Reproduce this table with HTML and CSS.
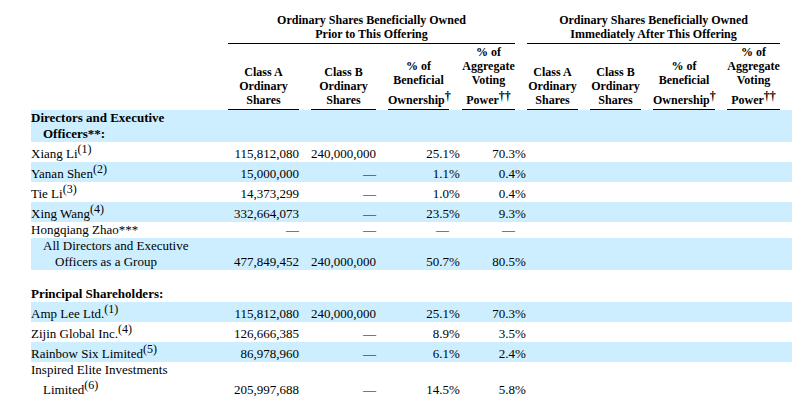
FILE: index.html
```html
<!DOCTYPE html>
<html lang="en">
<head>
<meta charset="utf-8">
<title>Beneficial Ownership</title>
<link rel="stylesheet" href="styles.css">
</head>
<body>
<div class="page">
<table class="own">
  <colgroup>
    <col class="w-label">
    <col class="w-a1"><col class="w-sp">
    <col class="w-b1"><col class="w-sp">
    <col class="w-p1"><col class="w-sp13">
    <col class="w-v1"><col class="w-sp">
    <col class="w-a2"><col class="w-sp">
    <col class="w-b2"><col class="w-sp">
    <col class="w-p2"><col class="w-sp">
    <col class="w-v2"><col class="w-sp">
  </colgroup>
  <thead>
    <tr class="grp">
      <th></th>
      <th colspan="7" class="grp-h">Ordinary Shares Beneficially Owned<br>Prior to This Offering</th>
      <th></th>
      <th colspan="7" class="grp-h">Ordinary Shares Beneficially Owned<br>Immediately After This Offering</th>
      <th></th>
    </tr>
    <tr class="cols">
      <th></th>
      <th class="ch">Class A<br>Ordinary<br>Shares</th><th></th>
      <th class="ch">Class B<br>Ordinary<br>Shares</th><th></th>
      <th class="ch">% of<br>Beneficial<br>Ownership<sup>†</sup></th><th></th>
      <th class="ch">% of<br>Aggregate<br>Voting<br>Power<sup>††</sup></th><th></th>
      <th class="ch">Class A<br>Ordinary<br>Shares</th><th></th>
      <th class="ch">Class B<br>Ordinary<br>Shares</th><th></th>
      <th class="ch">% of<br>Beneficial<br>Ownership<sup>†</sup></th><th></th>
      <th class="ch">% of<br>Aggregate<br>Voting<br>Power<sup>††</sup></th><th></th>
    </tr>
  </thead>
  <tbody>
    <tr class="blue">
      <td class="lbl sect">Directors and Executive Officers**:</td>
      <td colspan="16"></td>
    </tr>
    <tr>
      <td class="lbl">Xiang Li<sup>(1)</sup></td>
      <td class="num">115,812,080</td><td></td>
      <td class="num">240,000,000</td><td></td>
      <td class="num">25.1</td><td class="pct">%</td>
      <td class="num">70.3</td><td class="pct">%</td>
      <td colspan="8"></td>
    </tr>
    <tr class="blue">
      <td class="lbl">Yanan Shen<sup>(2)</sup></td>
      <td class="num">15,000,000</td><td></td>
      <td class="num">—</td><td></td>
      <td class="num">1.1</td><td class="pct">%</td>
      <td class="num">0.4</td><td class="pct">%</td>
      <td colspan="8"></td>
    </tr>
    <tr>
      <td class="lbl">Tie Li<sup>(3)</sup></td>
      <td class="num">14,373,299</td><td></td>
      <td class="num">—</td><td></td>
      <td class="num">1.0</td><td class="pct">%</td>
      <td class="num">0.4</td><td class="pct">%</td>
      <td colspan="8"></td>
    </tr>
    <tr class="blue">
      <td class="lbl">Xing Wang<sup>(4)</sup></td>
      <td class="num">332,664,073</td><td></td>
      <td class="num">—</td><td></td>
      <td class="num">23.5</td><td class="pct">%</td>
      <td class="num">9.3</td><td class="pct">%</td>
      <td colspan="8"></td>
    </tr>
    <tr>
      <td class="lbl">Hongqiang Zhao***</td>
      <td class="num">—</td><td></td>
      <td class="num">—</td><td></td>
      <td class="num">—</td><td></td>
      <td class="num">—</td><td></td>
      <td colspan="8"></td>
    </tr>
    <tr class="blue">
      <td class="lbl ind">All Directors and Executive Officers as a Group</td>
      <td class="num">477,849,452</td><td></td>
      <td class="num">240,000,000</td><td></td>
      <td class="num">50.7</td><td class="pct">%</td>
      <td class="num">80.5</td><td class="pct">%</td>
      <td colspan="8"></td>
    </tr>
    <tr class="gap">
      <td colspan="17"></td>
    </tr>
    <tr>
      <td class="lbl sect">Principal Shareholders:</td>
      <td colspan="16"></td>
    </tr>
    <tr class="blue">
      <td class="lbl">Amp Lee Ltd.<sup>(1)</sup></td>
      <td class="num">115,812,080</td><td></td>
      <td class="num">240,000,000</td><td></td>
      <td class="num">25.1</td><td class="pct">%</td>
      <td class="num">70.3</td><td class="pct">%</td>
      <td colspan="8"></td>
    </tr>
    <tr>
      <td class="lbl">Zijin Global Inc.<sup>(4)</sup></td>
      <td class="num">126,666,385</td><td></td>
      <td class="num">—</td><td></td>
      <td class="num">8.9</td><td class="pct">%</td>
      <td class="num">3.5</td><td class="pct">%</td>
      <td colspan="8"></td>
    </tr>
    <tr class="blue">
      <td class="lbl">Rainbow Six Limited<sup>(5)</sup></td>
      <td class="num">86,978,960</td><td></td>
      <td class="num">—</td><td></td>
      <td class="num">6.1</td><td class="pct">%</td>
      <td class="num">2.4</td><td class="pct">%</td>
      <td colspan="8"></td>
    </tr>
    <tr>
      <td class="lbl">Inspired Elite Investments Limited<sup>(6)</sup></td>
      <td class="num">205,997,688</td><td></td>
      <td class="num">—</td><td></td>
      <td class="num">14.5</td><td class="pct">%</td>
      <td class="num">5.8</td><td class="pct">%</td>
      <td colspan="8"></td>
    </tr>
  </tbody>
</table>
</div>
</body>
</html>
```
FILE: styles.css
```css
html, body {
  margin: 0;
  padding: 0;
  background: #ffffff;
}

body {
  font-family: "Liberation Serif", "Times New Roman", serif;
  color: #000000;
}

.page {
  padding: 13px 0 0 31px;
}

.own {
  border-collapse: separate;
  border-spacing: 0;
  table-layout: fixed;
  width: 761px;
  font-size: 13px;
  line-height: 16px;
}

.w-label { width: 197px; }
.w-a1 { width: 71px; }
.w-b1 { width: 65px; }
.w-p1 { width: 61px; }
.w-v1 { width: 53px; }
.w-a2 { width: 51px; }
.w-b2 { width: 51px; }
.w-p2 { width: 62px; }
.w-v2 { width: 53px; }
.w-sp { width: 12px; }
.w-sp13 { width: 13px; }

.own th {
  font-weight: bold;
  font-size: 12px;
  line-height: 14px;
  padding: 0;
  text-align: center;
  vertical-align: bottom;
}

.grp th {
  padding-bottom: 2px;
}

.grp .grp-h {
  border-bottom: 1px solid #000000;
}

.cols th {
  padding: 1px 0 2px;
}

.cols .ch {
  border-bottom: 1px solid #000000;
}

.cols sup {
  font-size: 12px;
  font-weight: bold;
  line-height: 18px;
  vertical-align: 4px;
}

.own td {
  padding: 0;
  vertical-align: bottom;
}

.own td sup {
  font-size: 12px;
  line-height: 15px;
  vertical-align: 5px;
}

.own .blue td {
  background: #cceeff;
}

.own .lbl {
  padding-left: 12px;
  text-indent: -12px;
  padding-right: 20px;
}

.own .lbl.ind {
  padding-left: 24px;
}

.own .sect {
  font-weight: bold;
}

.own .num {
  text-align: right;
  white-space: nowrap;
}

.own .pct {
  text-align: left;
  white-space: nowrap;
}

.own .gap td {
  height: 16px;
}
```
